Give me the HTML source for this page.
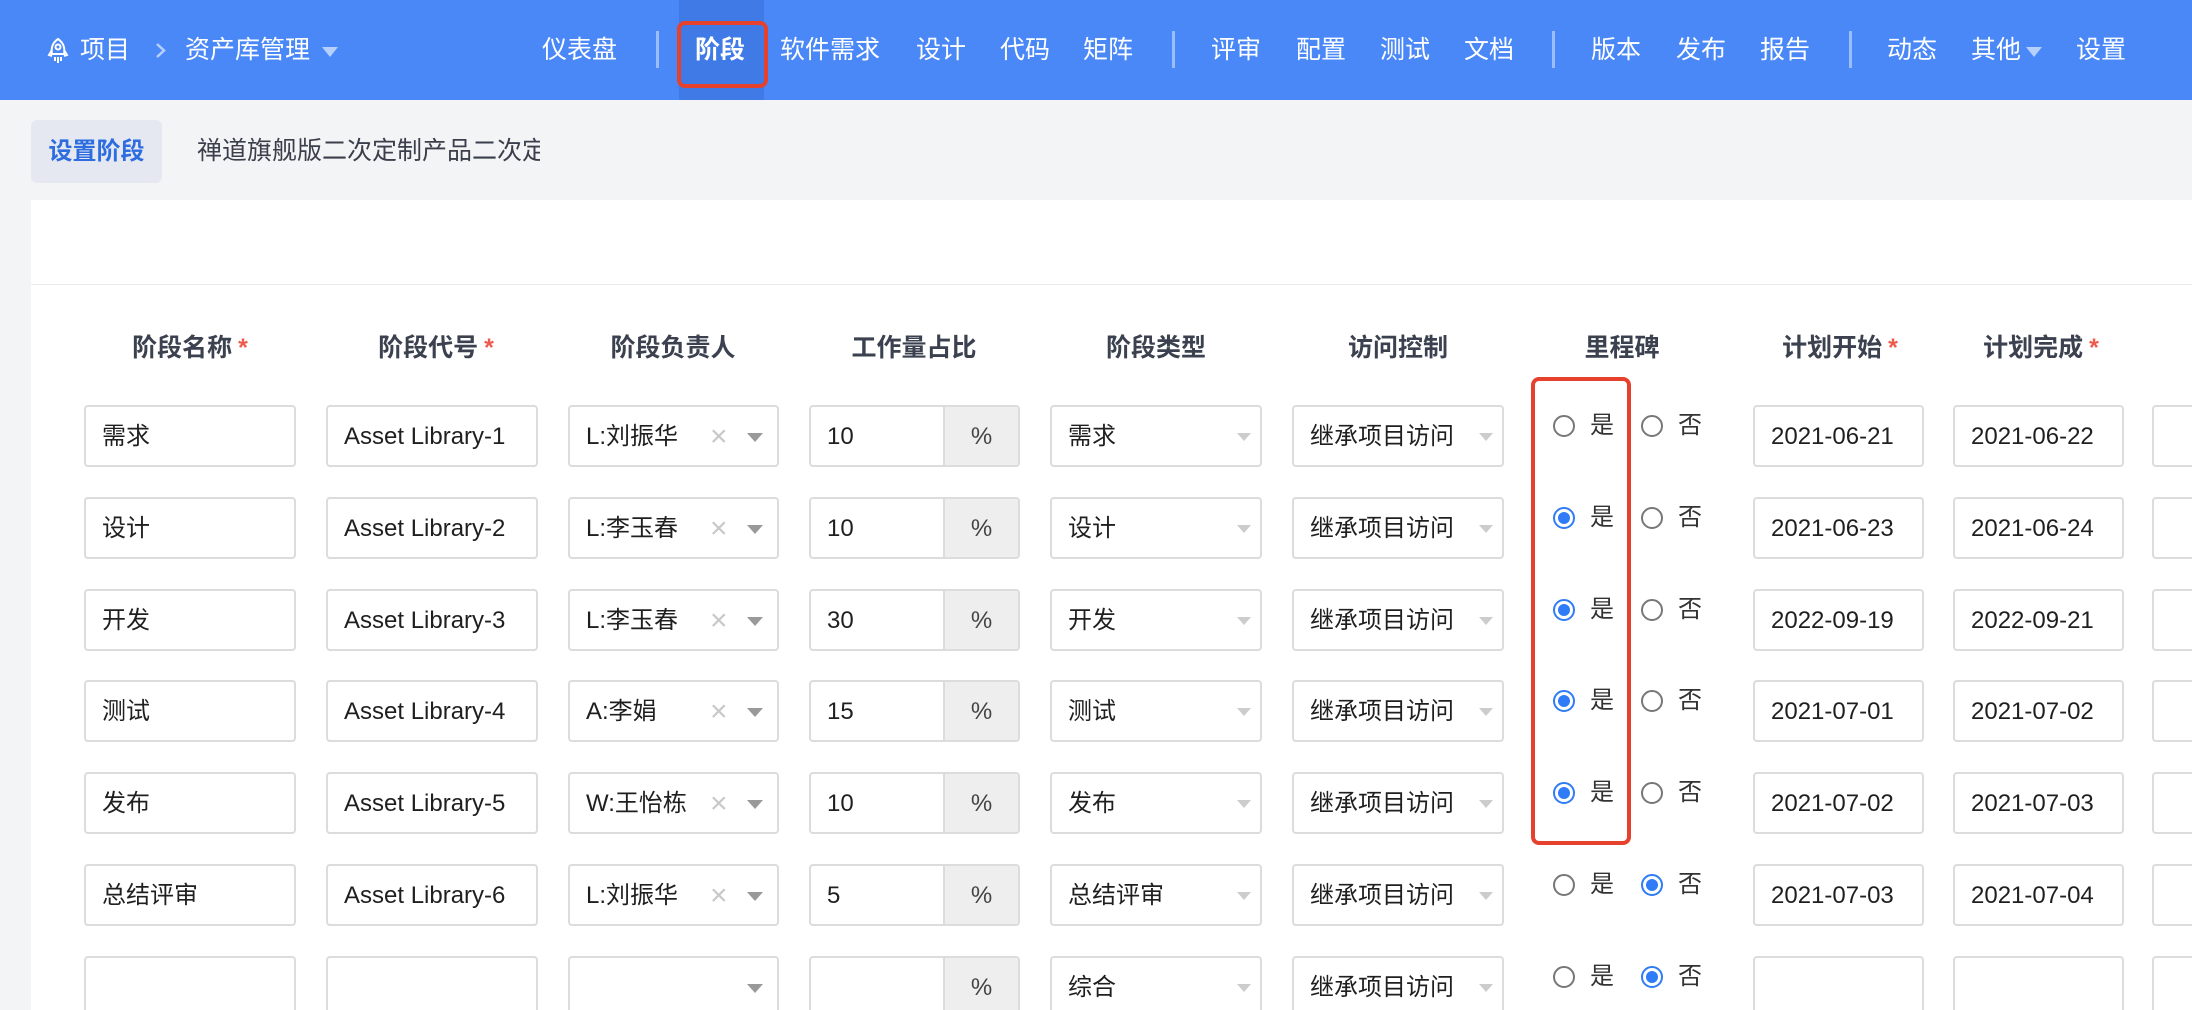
<!DOCTYPE html>
<html><head><meta charset="utf-8">
<style>
*{margin:0;padding:0;box-sizing:border-box}
html,body{width:2192px;height:1010px;overflow:hidden}
body{background:#f3f4f6;font-family:"Liberation Sans","Noto Sans CJK SC",sans-serif;position:relative}
#wrap{position:absolute;left:0;top:0;width:2192px;height:1010px;overflow:hidden}
.nav{position:absolute;left:0;top:0;width:2192px;height:100px;background:#4a88f8;color:#fff;font-size:25px}
.nav span{position:absolute;top:32px;line-height:36px;white-space:nowrap}
.sep{position:absolute;top:31px;width:3px;height:37px;background:rgba(255,255,255,.45)}
.act{position:absolute;left:679px;top:0;width:85px;height:100px;background:#3f7ae6}
.redn{position:absolute;left:677px;top:21px;width:91px;height:67px;border:4px solid #e5412c;border-radius:8px}
.tri{position:absolute;width:0;height:0;border-left:8px solid transparent;border-right:8px solid transparent;border-top:10px solid rgba(255,255,255,.6)}
.sub{position:absolute;left:31px;top:120px;width:131px;height:63px;background:#e5e8f0;border-radius:6px;color:#2d6de0;font-weight:bold;font-size:24px;line-height:63px;text-align:center}
.crumb2{position:absolute;left:197px;top:120px;width:343px;overflow:hidden;white-space:nowrap;line-height:63px;font-size:25px;color:#3a3f4b}
.card{position:absolute;left:31px;top:200px;width:2161px;height:810px;background:#fff}
.cardline{position:absolute;left:31px;top:284px;width:2161px;height:1px;background:#e8eaee}
.h{position:absolute;top:330px;font-size:25px;font-weight:bold;color:#3b414f;white-space:nowrap;line-height:36px;transform:translateX(-50%)}
.h i{color:#ee5a4c;font-style:normal;margin-left:6px}
.b{position:absolute;height:62px;border:2px solid #dcdcdc;border-radius:4px;background:#fff;font-size:24px;color:#1f1f1f;line-height:60px;padding-left:16px;white-space:nowrap;overflow:hidden}
.pct{position:absolute;top:0;right:0;width:75px;height:58px;background:#eeeeee;border-left:2px solid #dcdcdc;text-align:center;color:#444;font-size:24px}
.x{position:absolute;left:140px;top:0;color:#c8c8c8;font-size:30px}
.car{position:absolute;top:26px;width:0;height:0;border-left:8px solid transparent;border-right:8px solid transparent;border-top:9px solid #999}
.car.l{border-top-color:#ccc;border-left-width:7px;border-right-width:7px;border-top-width:8px}
.r{position:absolute;width:22px;height:22px;border:2px solid #777;border-radius:50%;background:#fff}
.r.on{border:2px solid #2f7cf6}
.r.on::after{content:"";position:absolute;left:3px;top:3px;width:12px;height:12px;border-radius:50%;background:#2f7cf6}
.rt{position:absolute;font-size:24px;color:#333;line-height:30px}
.redm{position:absolute;left:1531px;top:377px;width:100px;height:468px;border:4px solid #e5412c;border-radius:8px}
.row{position:absolute;left:0;width:2192px;height:62px}
</style></head><body><div id="wrap">
<div class="nav">
<svg style="position:absolute;left:47px;top:37px" width="22" height="27" viewBox="0 0 22 27" fill="none" stroke="#fff" stroke-width="2"><path d="M11 2 C5 6 4 12 5 17 L17 17 C18 12 17 6 11 2Z"/><circle cx="11" cy="10" r="2.5"/><path d="M5 13 L2 18 L5 19 M17 13 L20 18 L17 19 M8 20 L8 24 M11 20 L11 26 M14 20 L14 24"/></svg>
<span style="left:80px">项目</span>
<svg style="position:absolute;left:155px;top:42px" width="12" height="17" viewBox="0 0 12 17"><path d="M2 2 L9 8.5 L2 15" stroke="rgba(255,255,255,.6)" stroke-width="2.5" fill="none"/></svg>
<span style="left:185px">资产库管理</span>
<div class="tri" style="left:322px;top:47px"></div>
<span style="left:542px">仪表盘</span>
<div class="sep" style="left:656px"></div>
<div class="act"></div>
<span style="left:695px;font-weight:bold">阶段</span>
<div class="redn"></div>
<span style="left:780px">软件需求</span>
<span style="left:916px">设计</span>
<span style="left:1000px">代码</span>
<span style="left:1083px">矩阵</span>
<div class="sep" style="left:1172px"></div>
<span style="left:1211px">评审</span>
<span style="left:1296px">配置</span>
<span style="left:1380px">测试</span>
<span style="left:1464px">文档</span>
<div class="sep" style="left:1552px"></div>
<span style="left:1591px">版本</span>
<span style="left:1676px">发布</span>
<span style="left:1760px">报告</span>
<div class="sep" style="left:1849px"></div>
<span style="left:1887px">动态</span>
<span style="left:1971px">其他</span>
<div class="tri" style="left:2026px;top:47px"></div>
<span style="left:2076px">设置</span>
</div>
<div class="sub">设置阶段</div>
<div class="crumb2">禅道旗舰版二次定制产品二次定制</div>
<div class="card"></div>
<div class="cardline"></div>

<div class="h" style="left:190px">阶段名称<i>*</i></div>
<div class="h" style="left:436px">阶段代号<i>*</i></div>
<div class="h" style="left:673px">阶段负责人</div>
<div class="h" style="left:914px">工作量占比</div>
<div class="h" style="left:1156px">阶段类型</div>
<div class="h" style="left:1398px">访问控制</div>
<div class="h" style="left:1622px">里程碑</div>
<div class="h" style="left:1840px">计划开始<i>*</i></div>
<div class="h" style="left:2041px">计划完成<i>*</i></div>

<div class="row" style="top:405px">
<div class="b" style="left:84px;width:212px">需求</div>
<div class="b" style="left:326px;width:212px">Asset Library-1</div>
<div class="b" style="left:568px;width:211px">L:刘振华<span class="x">×</span><div class="car" style="left:177px"></div></div>
<div class="b" style="left:809px;width:211px">10<div class="pct">%</div></div>
<div class="b" style="left:1050px;width:212px">需求<div class="car l" style="left:185px"></div></div>
<div class="b" style="left:1292px;width:212px;padding-right:30px">继承项目访问<div class="car l" style="left:185px"></div></div>
<div class="r" style="left:1553px;top:10px"></div><div class="rt" style="left:1590px;top:6px">是</div>
<div class="r" style="left:1641px;top:10px"></div><div class="rt" style="left:1678px;top:6px">否</div>
<div class="b" style="left:1753px;width:171px">2021-06-21</div>
<div class="b" style="left:1953px;width:171px">2021-06-22</div>
<div class="b" style="left:2152px;width:60px"></div>
</div>
<div class="row" style="top:497px">
<div class="b" style="left:84px;width:212px">设计</div>
<div class="b" style="left:326px;width:212px">Asset Library-2</div>
<div class="b" style="left:568px;width:211px">L:李玉春<span class="x">×</span><div class="car" style="left:177px"></div></div>
<div class="b" style="left:809px;width:211px">10<div class="pct">%</div></div>
<div class="b" style="left:1050px;width:212px">设计<div class="car l" style="left:185px"></div></div>
<div class="b" style="left:1292px;width:212px;padding-right:30px">继承项目访问<div class="car l" style="left:185px"></div></div>
<div class="r on" style="left:1553px;top:10px"></div><div class="rt" style="left:1590px;top:6px">是</div>
<div class="r" style="left:1641px;top:10px"></div><div class="rt" style="left:1678px;top:6px">否</div>
<div class="b" style="left:1753px;width:171px">2021-06-23</div>
<div class="b" style="left:1953px;width:171px">2021-06-24</div>
<div class="b" style="left:2152px;width:60px"></div>
</div>
<div class="row" style="top:589px">
<div class="b" style="left:84px;width:212px">开发</div>
<div class="b" style="left:326px;width:212px">Asset Library-3</div>
<div class="b" style="left:568px;width:211px">L:李玉春<span class="x">×</span><div class="car" style="left:177px"></div></div>
<div class="b" style="left:809px;width:211px">30<div class="pct">%</div></div>
<div class="b" style="left:1050px;width:212px">开发<div class="car l" style="left:185px"></div></div>
<div class="b" style="left:1292px;width:212px;padding-right:30px">继承项目访问<div class="car l" style="left:185px"></div></div>
<div class="r on" style="left:1553px;top:10px"></div><div class="rt" style="left:1590px;top:6px">是</div>
<div class="r" style="left:1641px;top:10px"></div><div class="rt" style="left:1678px;top:6px">否</div>
<div class="b" style="left:1753px;width:171px">2022-09-19</div>
<div class="b" style="left:1953px;width:171px">2022-09-21</div>
<div class="b" style="left:2152px;width:60px"></div>
</div>
<div class="row" style="top:680px">
<div class="b" style="left:84px;width:212px">测试</div>
<div class="b" style="left:326px;width:212px">Asset Library-4</div>
<div class="b" style="left:568px;width:211px">A:李娟<span class="x">×</span><div class="car" style="left:177px"></div></div>
<div class="b" style="left:809px;width:211px">15<div class="pct">%</div></div>
<div class="b" style="left:1050px;width:212px">测试<div class="car l" style="left:185px"></div></div>
<div class="b" style="left:1292px;width:212px;padding-right:30px">继承项目访问<div class="car l" style="left:185px"></div></div>
<div class="r on" style="left:1553px;top:10px"></div><div class="rt" style="left:1590px;top:6px">是</div>
<div class="r" style="left:1641px;top:10px"></div><div class="rt" style="left:1678px;top:6px">否</div>
<div class="b" style="left:1753px;width:171px">2021-07-01</div>
<div class="b" style="left:1953px;width:171px">2021-07-02</div>
<div class="b" style="left:2152px;width:60px"></div>
</div>
<div class="row" style="top:772px">
<div class="b" style="left:84px;width:212px">发布</div>
<div class="b" style="left:326px;width:212px">Asset Library-5</div>
<div class="b" style="left:568px;width:211px">W:王怡栋<span class="x">×</span><div class="car" style="left:177px"></div></div>
<div class="b" style="left:809px;width:211px">10<div class="pct">%</div></div>
<div class="b" style="left:1050px;width:212px">发布<div class="car l" style="left:185px"></div></div>
<div class="b" style="left:1292px;width:212px;padding-right:30px">继承项目访问<div class="car l" style="left:185px"></div></div>
<div class="r on" style="left:1553px;top:10px"></div><div class="rt" style="left:1590px;top:6px">是</div>
<div class="r" style="left:1641px;top:10px"></div><div class="rt" style="left:1678px;top:6px">否</div>
<div class="b" style="left:1753px;width:171px">2021-07-02</div>
<div class="b" style="left:1953px;width:171px">2021-07-03</div>
<div class="b" style="left:2152px;width:60px"></div>
</div>
<div class="row" style="top:864px">
<div class="b" style="left:84px;width:212px">总结评审</div>
<div class="b" style="left:326px;width:212px">Asset Library-6</div>
<div class="b" style="left:568px;width:211px">L:刘振华<span class="x">×</span><div class="car" style="left:177px"></div></div>
<div class="b" style="left:809px;width:211px">5<div class="pct">%</div></div>
<div class="b" style="left:1050px;width:212px">总结评审<div class="car l" style="left:185px"></div></div>
<div class="b" style="left:1292px;width:212px;padding-right:30px">继承项目访问<div class="car l" style="left:185px"></div></div>
<div class="r" style="left:1553px;top:10px"></div><div class="rt" style="left:1590px;top:6px">是</div>
<div class="r on" style="left:1641px;top:10px"></div><div class="rt" style="left:1678px;top:6px">否</div>
<div class="b" style="left:1753px;width:171px">2021-07-03</div>
<div class="b" style="left:1953px;width:171px">2021-07-04</div>
<div class="b" style="left:2152px;width:60px"></div>
</div>
<div class="row" style="top:956px">
<div class="b" style="left:84px;width:212px"></div>
<div class="b" style="left:326px;width:212px"></div>
<div class="b" style="left:568px;width:211px"><div class="car" style="left:177px"></div></div>
<div class="b" style="left:809px;width:211px"><div class="pct">%</div></div>
<div class="b" style="left:1050px;width:212px">综合<div class="car l" style="left:185px"></div></div>
<div class="b" style="left:1292px;width:212px;padding-right:30px">继承项目访问<div class="car l" style="left:185px"></div></div>
<div class="r" style="left:1553px;top:10px"></div><div class="rt" style="left:1590px;top:6px">是</div>
<div class="r on" style="left:1641px;top:10px"></div><div class="rt" style="left:1678px;top:6px">否</div>
<div class="b" style="left:1753px;width:171px"></div>
<div class="b" style="left:1953px;width:171px"></div>
<div class="b" style="left:2152px;width:60px"></div>
</div>

<div class="redm"></div>
</div></body></html>
